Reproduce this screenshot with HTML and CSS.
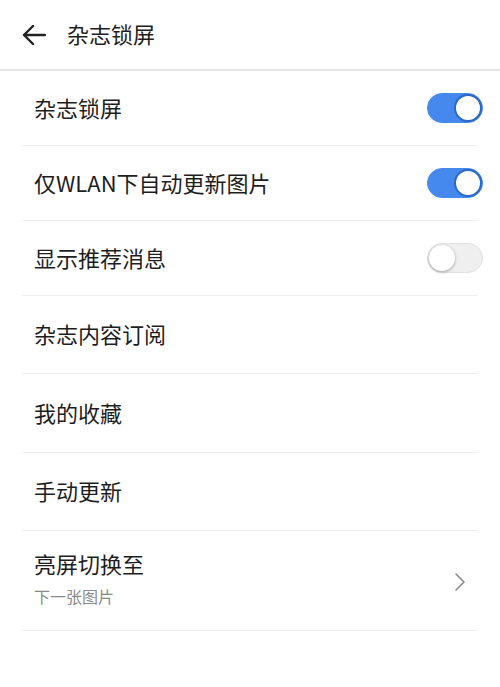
FILE: index.html
```html
<!DOCTYPE html>
<html lang="zh">
<head>
<meta charset="utf-8">
<link rel="stylesheet" href="styles.css">
</head>
<body>
<div class="header">
  <svg class="back" width="24" height="20" viewBox="0 0 24 20"><path d="M23 10H2M11 1L2 10l9 9" fill="none" stroke="#222" stroke-width="2.4" stroke-linecap="round" stroke-linejoin="round"/></svg>
  <div class="title">杂志锁屏</div>
</div>
<div class="list">
  <div class="row r75"><span class="label">杂志锁屏</span><span class="switch on"><span class="knob"></span></span></div>
  <div class="row r75"><span class="label">仅WLAN下自动更新图片</span><span class="switch on"><span class="knob"></span></span></div>
  <div class="row r75"><span class="label">显示推荐消息</span><span class="switch"><span class="knob"></span></span></div>
  <div class="row r78"><span class="label">杂志内容订阅</span></div>
  <div class="row r79"><span class="label">我的收藏</span></div>
  <div class="row r78"><span class="label">手动更新</span></div>
  <div class="row r100">
    <div class="stack"><span class="label">亮屏切换至</span><span class="sub">下一张图片</span></div>
    <svg class="chev" width="12" height="20" viewBox="0 0 12 20"><path d="M2 2l8 8-8 8" fill="none" stroke="#8a8a8a" stroke-width="1.6" stroke-linecap="round" stroke-linejoin="round"/></svg>
  </div>
</div>
</body>
</html>
```

FILE: styles.css
```css
html, body { margin: 0; padding: 0; background: #fff; }
body { font-family: "Noto Sans CJK SC", "Noto Sans", sans-serif; color: #1e1e1e; width: 500px; }
.header { height: 69px; display: flex; align-items: center; border-bottom: 2px solid #e3e3e3; box-sizing: content-box; }
.back { margin-left: 22px; margin-right: 21px; }
.title { font-size: 22px; line-height: 1; margin-top: -3px; }
.list { padding: 0 22px; }
.row { display: flex; align-items: center; justify-content: space-between; border-bottom: 1.5px solid #eeeeee; padding-left: 12px; padding-right: 0; box-sizing: border-box; }
.r75 { height: 75px; }
.r78 { height: 78px; }
.r79 { height: 79px; }
.r100 { height: 100px; }
.label { font-size: 22px; line-height: 1; margin-top: -3px; }
.stack { display: flex; flex-direction: column; gap: 14px; margin-top: -6px; }
.stack .label { margin-top: 0; }
.sub { font-size: 16px; line-height: 1; color: #8a8a8a; }
.switch { width: 56px; height: 30px; border-radius: 15px; background: #efefef; border: 1px solid #e2e2e2; box-sizing: border-box; position: relative; display: block; margin-right: -5px; }
.switch .knob { position: absolute; top: 1px; left: 1px; width: 26px; height: 26px; border-radius: 50%; background: #fff; box-shadow: 0 1px 3px rgba(0,0,0,0.35); }
.switch.on { background: #4589ee; border-color: #4589ee; }
.switch.on .knob { left: auto; right: 0; top: 0; width: 28px; height: 28px; box-shadow: none; border: 2px solid #2d69c4; box-sizing: border-box; }
.chev { margin-right: 12px; margin-top: 2px; }
```
